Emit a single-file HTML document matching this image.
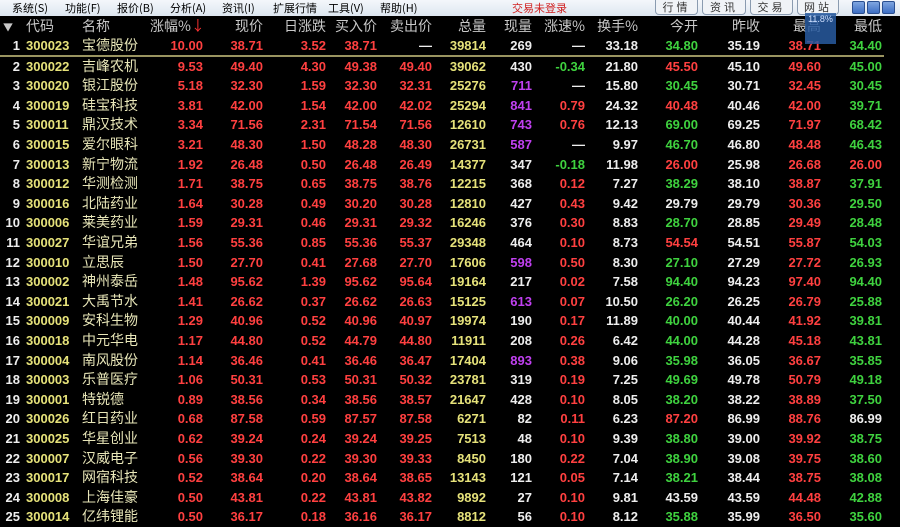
<!DOCTYPE html>
<html><head><meta charset="utf-8"><style>
*{margin:0;padding:0;box-sizing:border-box}
body{width:900px;height:514px;overflow:hidden;background:#000;font-family:"Liberation Sans","Noto Sans CJK SC",sans-serif;position:relative}
#menu{position:absolute;left:0;top:0;width:900px;height:16px;background:linear-gradient(#f4f7fb,#dde6f0);font-size:11px;color:#000}
#menu span{position:absolute;top:1px;font-family:"Noto Sans CJK SC",sans-serif;font-size:11px;line-height:14px}
.btn{position:absolute;top:0;height:15px;border:1px solid #8a9bb0;border-top:none;border-radius:0 0 4px 4px;background:#f0f3f7;font-size:11px;color:#333;text-align:center;line-height:14px;font-family:"Noto Sans CJK SC",sans-serif;letter-spacing:3px}
.wb{position:absolute;top:1px;width:13px;height:13px;background:linear-gradient(#7fa6e0,#3d6fc4);border:1px solid #2a4f90;border-radius:2px}
table{position:absolute;left:0;top:17px;border-collapse:collapse;table-layout:fixed;width:884px}
td{height:19.6px;padding:0 2px 0 0;text-align:right;white-space:nowrap;overflow:hidden;font-weight:bold;font-size:13px;line-height:19px;color:#eee}
tr.h td{font-weight:normal;font-size:14px;color:#c8c8c8;font-family:"Noto Sans CJK SC",sans-serif;height:19px}
td.c{text-align:left;padding-left:4px;color:#e6e27a}
td.n{text-align:left;padding-left:4px;color:#e8e6b8;font-weight:normal;font-size:14px;font-family:"Noto Sans CJK SC",sans-serif}
.r{color:#ff4040}.g{color:#3fd23f}.y{color:#e6e27a}.m{color:#c040f0}.w{color:#eee}
tr.first td{border-bottom:2px solid #9a9460}
</style></head><body>
<div id="menu">
<span style="left:12px">系统(S)</span><span style="left:65px">功能(F)</span><span style="left:117px">报价(B)</span><span style="left:170px">分析(A)</span><span style="left:222px">资讯(I)</span><span style="left:273px">扩展行情</span><span style="left:328px">工具(V)</span><span style="left:380px">帮助(H)</span>
<span style="left:512px;color:#d02020">交易未登录</span>
<div class="btn" style="left:655px;width:43px">行情</div>
<div class="btn" style="left:702px;width:44px">资讯</div>
<div class="btn" style="left:750px;width:43px">交易</div>
<div class="btn" style="left:797px;width:42px">网站</div>
<div class="wb" style="left:852px"></div><div class="wb" style="left:867px"></div><div class="wb" style="left:882px"></div>
</div>
<table>
<colgroup><col style="width:22px"><col style="width:56px"><col style="width:72px"><col style="width:55px"><col style="width:60px"><col style="width:63px"><col style="width:51px"><col style="width:55px"><col style="width:54px"><col style="width:46px"><col style="width:53px"><col style="width:53px"><col style="width:60px"><col style="width:62px"><col style="width:61px"><col style="width:61px"></colgroup>
<tr class="h"><td style="text-align:left;padding-left:3px;font-size:10px">▼</td><td class="c" style="color:#c8c8c8;font-weight:normal">代码</td><td class="n" style="color:#c8c8c8">名称</td><td>涨幅%<span style="color:#f33">↓</span></td><td>现价</td><td>日涨跌</td><td>买入价</td><td>卖出价</td><td>总量</td><td>现量</td><td>涨速%</td><td>换手%</td><td>今开</td><td>昨收</td><td>最高</td><td>最低</td></tr>
<tr class="first"><td>1</td><td class="c">300023</td><td class="n">宝德股份</td><td class="r">10.00</td><td class="r">38.71</td><td class="r">3.52</td><td class="r">38.71</td><td>—</td><td class="y">39814</td><td>269</td><td>—</td><td>33.18</td><td class="g">34.80</td><td>35.19</td><td class="r">38.71</td><td class="g">34.40</td></tr>
<tr><td>2</td><td class="c">300022</td><td class="n">吉峰农机</td><td class="r">9.53</td><td class="r">49.40</td><td class="r">4.30</td><td class="r">49.38</td><td class="r">49.40</td><td class="y">39062</td><td>430</td><td class="g">-0.34</td><td>21.80</td><td class="r">45.50</td><td>45.10</td><td class="r">49.60</td><td class="g">45.00</td></tr>
<tr><td>3</td><td class="c">300020</td><td class="n">银江股份</td><td class="r">5.18</td><td class="r">32.30</td><td class="r">1.59</td><td class="r">32.30</td><td class="r">32.31</td><td class="y">25276</td><td class="m">711</td><td>—</td><td>15.80</td><td class="g">30.45</td><td>30.71</td><td class="r">32.45</td><td class="g">30.45</td></tr>
<tr><td>4</td><td class="c">300019</td><td class="n">硅宝科技</td><td class="r">3.81</td><td class="r">42.00</td><td class="r">1.54</td><td class="r">42.00</td><td class="r">42.02</td><td class="y">25294</td><td class="m">841</td><td class="r">0.79</td><td>24.32</td><td class="r">40.48</td><td>40.46</td><td class="r">42.00</td><td class="g">39.71</td></tr>
<tr><td>5</td><td class="c">300011</td><td class="n">鼎汉技术</td><td class="r">3.34</td><td class="r">71.56</td><td class="r">2.31</td><td class="r">71.54</td><td class="r">71.56</td><td class="y">12610</td><td class="m">743</td><td class="r">0.76</td><td>12.13</td><td class="g">69.00</td><td>69.25</td><td class="r">71.97</td><td class="g">68.42</td></tr>
<tr><td>6</td><td class="c">300015</td><td class="n">爱尔眼科</td><td class="r">3.21</td><td class="r">48.30</td><td class="r">1.50</td><td class="r">48.28</td><td class="r">48.30</td><td class="y">26731</td><td class="m">587</td><td>—</td><td>9.97</td><td class="g">46.70</td><td>46.80</td><td class="r">48.48</td><td class="g">46.43</td></tr>
<tr><td>7</td><td class="c">300013</td><td class="n">新宁物流</td><td class="r">1.92</td><td class="r">26.48</td><td class="r">0.50</td><td class="r">26.48</td><td class="r">26.49</td><td class="y">14377</td><td>347</td><td class="g">-0.18</td><td>11.98</td><td class="r">26.00</td><td>25.98</td><td class="r">26.68</td><td class="r">26.00</td></tr>
<tr><td>8</td><td class="c">300012</td><td class="n">华测检测</td><td class="r">1.71</td><td class="r">38.75</td><td class="r">0.65</td><td class="r">38.75</td><td class="r">38.76</td><td class="y">12215</td><td>368</td><td class="r">0.12</td><td>7.27</td><td class="g">38.29</td><td>38.10</td><td class="r">38.87</td><td class="g">37.91</td></tr>
<tr><td>9</td><td class="c">300016</td><td class="n">北陆药业</td><td class="r">1.64</td><td class="r">30.28</td><td class="r">0.49</td><td class="r">30.20</td><td class="r">30.28</td><td class="y">12810</td><td>427</td><td class="r">0.43</td><td>9.42</td><td>29.79</td><td>29.79</td><td class="r">30.36</td><td class="g">29.50</td></tr>
<tr><td>10</td><td class="c">300006</td><td class="n">莱美药业</td><td class="r">1.59</td><td class="r">29.31</td><td class="r">0.46</td><td class="r">29.31</td><td class="r">29.32</td><td class="y">16246</td><td>376</td><td class="r">0.30</td><td>8.83</td><td class="g">28.70</td><td>28.85</td><td class="r">29.49</td><td class="g">28.48</td></tr>
<tr><td>11</td><td class="c">300027</td><td class="n">华谊兄弟</td><td class="r">1.56</td><td class="r">55.36</td><td class="r">0.85</td><td class="r">55.36</td><td class="r">55.37</td><td class="y">29348</td><td>464</td><td class="r">0.10</td><td>8.73</td><td class="r">54.54</td><td>54.51</td><td class="r">55.87</td><td class="g">54.03</td></tr>
<tr><td>12</td><td class="c">300010</td><td class="n">立思辰</td><td class="r">1.50</td><td class="r">27.70</td><td class="r">0.41</td><td class="r">27.68</td><td class="r">27.70</td><td class="y">17606</td><td class="m">598</td><td class="r">0.50</td><td>8.30</td><td class="g">27.10</td><td>27.29</td><td class="r">27.72</td><td class="g">26.93</td></tr>
<tr><td>13</td><td class="c">300002</td><td class="n">神州泰岳</td><td class="r">1.48</td><td class="r">95.62</td><td class="r">1.39</td><td class="r">95.62</td><td class="r">95.64</td><td class="y">19164</td><td>217</td><td class="r">0.02</td><td>7.58</td><td class="g">94.40</td><td>94.23</td><td class="r">97.40</td><td class="g">94.40</td></tr>
<tr><td>14</td><td class="c">300021</td><td class="n">大禹节水</td><td class="r">1.41</td><td class="r">26.62</td><td class="r">0.37</td><td class="r">26.62</td><td class="r">26.63</td><td class="y">15125</td><td class="m">613</td><td class="r">0.07</td><td>10.50</td><td class="g">26.20</td><td>26.25</td><td class="r">26.79</td><td class="g">25.88</td></tr>
<tr><td>15</td><td class="c">300009</td><td class="n">安科生物</td><td class="r">1.29</td><td class="r">40.96</td><td class="r">0.52</td><td class="r">40.96</td><td class="r">40.97</td><td class="y">19974</td><td>190</td><td class="r">0.17</td><td>11.89</td><td class="g">40.00</td><td>40.44</td><td class="r">41.92</td><td class="g">39.81</td></tr>
<tr><td>16</td><td class="c">300018</td><td class="n">中元华电</td><td class="r">1.17</td><td class="r">44.80</td><td class="r">0.52</td><td class="r">44.79</td><td class="r">44.80</td><td class="y">11911</td><td>208</td><td class="r">0.26</td><td>6.42</td><td class="g">44.00</td><td>44.28</td><td class="r">45.18</td><td class="g">43.81</td></tr>
<tr><td>17</td><td class="c">300004</td><td class="n">南风股份</td><td class="r">1.14</td><td class="r">36.46</td><td class="r">0.41</td><td class="r">36.46</td><td class="r">36.47</td><td class="y">17404</td><td class="m">893</td><td class="r">0.38</td><td>9.06</td><td class="g">35.98</td><td>36.05</td><td class="r">36.67</td><td class="g">35.85</td></tr>
<tr><td>18</td><td class="c">300003</td><td class="n">乐普医疗</td><td class="r">1.06</td><td class="r">50.31</td><td class="r">0.53</td><td class="r">50.31</td><td class="r">50.32</td><td class="y">23781</td><td>319</td><td class="r">0.19</td><td>7.25</td><td class="g">49.69</td><td>49.78</td><td class="r">50.79</td><td class="g">49.18</td></tr>
<tr><td>19</td><td class="c">300001</td><td class="n">特锐德</td><td class="r">0.89</td><td class="r">38.56</td><td class="r">0.34</td><td class="r">38.56</td><td class="r">38.57</td><td class="y">21647</td><td>428</td><td class="r">0.10</td><td>8.05</td><td class="g">38.20</td><td>38.22</td><td class="r">38.89</td><td class="g">37.50</td></tr>
<tr><td>20</td><td class="c">300026</td><td class="n">红日药业</td><td class="r">0.68</td><td class="r">87.58</td><td class="r">0.59</td><td class="r">87.57</td><td class="r">87.58</td><td class="y">6271</td><td>82</td><td class="r">0.11</td><td>6.23</td><td class="r">87.20</td><td>86.99</td><td class="r">88.76</td><td>86.99</td></tr>
<tr><td>21</td><td class="c">300025</td><td class="n">华星创业</td><td class="r">0.62</td><td class="r">39.24</td><td class="r">0.24</td><td class="r">39.24</td><td class="r">39.25</td><td class="y">7513</td><td>48</td><td class="r">0.10</td><td>9.39</td><td class="g">38.80</td><td>39.00</td><td class="r">39.92</td><td class="g">38.75</td></tr>
<tr><td>22</td><td class="c">300007</td><td class="n">汉威电子</td><td class="r">0.56</td><td class="r">39.30</td><td class="r">0.22</td><td class="r">39.30</td><td class="r">39.33</td><td class="y">8450</td><td>180</td><td class="r">0.22</td><td>7.04</td><td class="g">38.90</td><td>39.08</td><td class="r">39.75</td><td class="g">38.60</td></tr>
<tr><td>23</td><td class="c">300017</td><td class="n">网宿科技</td><td class="r">0.52</td><td class="r">38.64</td><td class="r">0.20</td><td class="r">38.64</td><td class="r">38.65</td><td class="y">13143</td><td>121</td><td class="r">0.05</td><td>7.14</td><td class="g">38.21</td><td>38.44</td><td class="r">38.75</td><td class="g">38.08</td></tr>
<tr><td>24</td><td class="c">300008</td><td class="n">上海佳豪</td><td class="r">0.50</td><td class="r">43.81</td><td class="r">0.22</td><td class="r">43.81</td><td class="r">43.82</td><td class="y">9892</td><td>27</td><td class="r">0.10</td><td>9.81</td><td>43.59</td><td>43.59</td><td class="r">44.48</td><td class="g">42.88</td></tr>
<tr><td>25</td><td class="c">300014</td><td class="n">亿纬锂能</td><td class="r">0.50</td><td class="r">36.17</td><td class="r">0.18</td><td class="r">36.16</td><td class="r">36.17</td><td class="y">8812</td><td>56</td><td class="r">0.10</td><td>8.12</td><td class="g">35.88</td><td>35.99</td><td class="r">36.50</td><td class="g">35.60</td></tr>
</table>
<div style="position:absolute;left:805px;top:13px;width:31px;height:31px;background:rgba(40,90,160,0.85);color:#cfe0ff;font-size:9px;text-align:center;line-height:12px">11.8%</div>
</body></html>
